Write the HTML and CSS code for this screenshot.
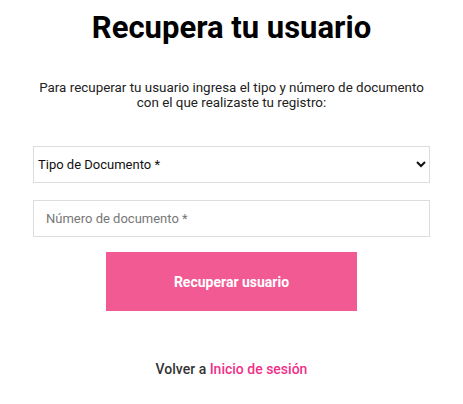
FILE: index.html
```html
<!DOCTYPE html>
<html lang="es">
<head>
<meta charset="utf-8">
<title>Recupera tu usuario</title>
<link rel="stylesheet" href="styles.css">
</head>
<body>
<main class="page">
  <h1 class="title">Recupera tu usuario</h1>
  <p class="intro">Para recuperar tu usuario ingresa el tipo y número de documento<br>con el que realizaste tu registro:</p>
  <form class="form">
    <select class="field select">
      <option>Tipo de Documento *</option>
    </select>
    <input class="field input" type="text" placeholder="Número de documento *">
    <button class="submit" type="button">Recuperar usuario</button>
  </form>
  <p class="back">Volver a <a href="#" class="link">Inicio de sesión</a></p>
</main>
</body>
</html>
```
FILE: styles.css
```css
html, body {
  margin: 0;
  padding: 0;
  background: #fff;
}
.page {
  font-family: Roboto, "Liberation Sans", sans-serif;
  padding: 0 33px;
  display: flex;
  flex-direction: column;
  align-items: stretch;
}
.title {
  margin: 10px 0 0;
  font-size: 31px;
  font-weight: 700;
  line-height: 36px;
  text-align: center;
  color: #000;
}
.intro {
  margin: 34px 0 0;
  font-size: 13.4px;
  line-height: 15px;
  text-align: center;
  color: #222;
}
.form {
  display: flex;
  flex-direction: column;
  margin-top: 36px;
}
.field {
  box-sizing: border-box;
  height: 37px;
  border: 1px solid #ddd;
  border-radius: 0;
  background: #fff;
  font-family: Roboto, "Liberation Sans", sans-serif;
  font-size: 13px;
  font-weight: 400;
  color: #111;
  outline: none;
}
.select {
  padding: 0;
}
.input {
  margin-top: 17px;
  padding: 0 12px;
}
.input::placeholder {
  color: #777;
}
.submit {
  align-self: center;
  margin-top: 15px;
  width: 251px;
  height: 59px;
  border: 0;
  background: #f25a94;
  color: #fff;
  font-family: Roboto, "Liberation Sans", sans-serif;
  font-size: 14px;
  font-weight: 700;
}
.back {
  margin: 50px 0 0;
  text-align: center;
  font-size: 14px;
  font-weight: 500;
  color: #333;
}
.link {
  color: #f0318a;
  text-decoration: none;
}
```
